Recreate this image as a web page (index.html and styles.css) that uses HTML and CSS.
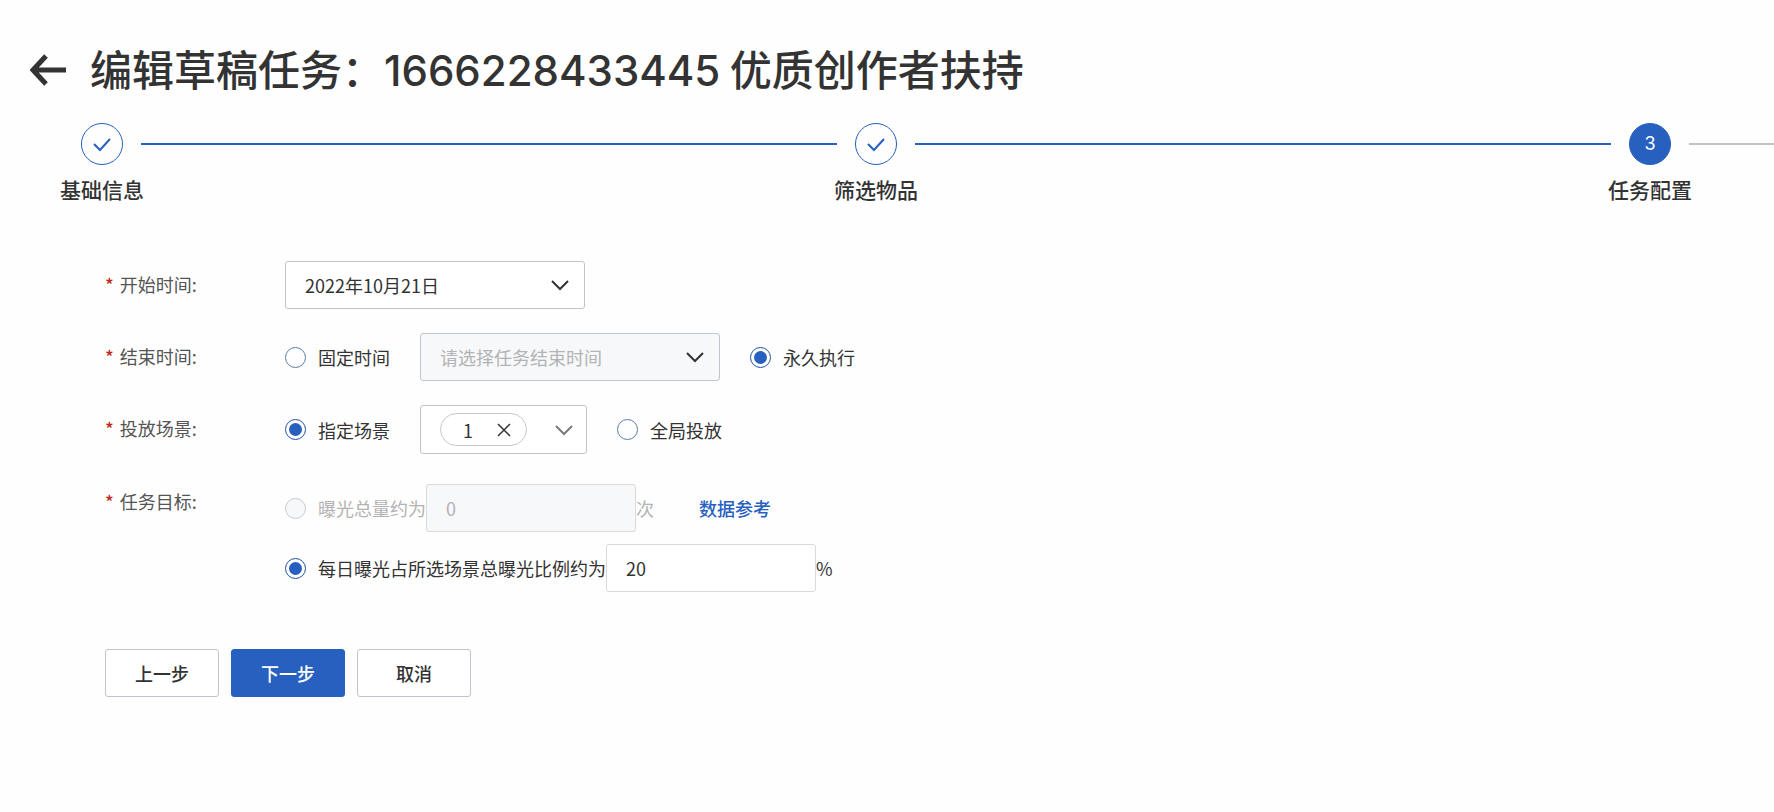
FILE: index.html
```
<!DOCTYPE html>
<html lang="zh-CN">
<head>
    <meta charset="UTF-8">
    <meta name="viewport" content="width=device-width, initial-scale=1.0">
    <title>编辑草稿任务</title>
    <link rel="stylesheet" href="styles.css">
</head>
<body>
    <header class="page-header">
        <a class="back" href="#" aria-label="返回">
            <svg width="38" height="32" viewBox="0 0 38 32" fill="none" stroke="currentColor" stroke-width="5">
                <path d="M36 16H4M16 2L3 16L16 30"/>
            </svg>
        </a>
        <h1>编辑草稿任务：<span class="task-id">1666228433445</span> 优质创作者扶持</h1>
    </header>

    <ol class="steps">
        <li class="step done">
            <span class="step-icon">
                <svg width="20" height="16" viewBox="0 0 20 16" fill="none" stroke="currentColor" stroke-width="2">
                    <path d="M2 8L8 14L18 3"/>
                </svg>
            </span>
            <span class="step-title">基础信息</span>
        </li>
        <li class="step done">
            <span class="step-icon">
                <svg width="20" height="16" viewBox="0 0 20 16" fill="none" stroke="currentColor" stroke-width="2">
                    <path d="M2 8L8 14L18 3"/>
                </svg>
            </span>
            <span class="step-title">筛选物品</span>
        </li>
        <li class="step current">
            <span class="step-icon">3</span>
            <span class="step-title">任务配置</span>
        </li>
    </ol>

    <form class="task-form">
        <div class="form-row">
            <label class="form-label" for="start-time">开始时间:</label>
            <div class="form-content">
                <div class="select">
                    <select id="start-time">
                        <option>2022年10月21日</option>
                    </select>
                    <svg class="chevron" width="18" height="12" viewBox="0 0 18 12" fill="none" stroke="currentColor" stroke-width="2">
                        <path d="M1 2L9 10L17 2"/>
                    </svg>
                </div>
            </div>
        </div>

        <div class="form-row">
            <span class="form-label" id="end-label">结束时间:</span>
            <div class="form-content" role="radiogroup" aria-labelledby="end-label">
                <label class="radio"><input type="radio" name="end">固定时间</label>
                <div class="select">
                    <select aria-label="任务结束时间" disabled>
                        <option>请选择任务结束时间</option>
                    </select>
                    <svg class="chevron" width="18" height="12" viewBox="0 0 18 12" fill="none" stroke="currentColor" stroke-width="2">
                        <path d="M1 2L9 10L17 2"/>
                    </svg>
                </div>
                <label class="radio"><input type="radio" name="end" checked>永久执行</label>
            </div>
        </div>

        <div class="form-row">
            <span class="form-label" id="scene-label">投放场景:</span>
            <div class="form-content" role="radiogroup" aria-labelledby="scene-label">
                <label class="radio"><input type="radio" name="scene" checked>指定场景</label>
                <div class="tag-select">
                    <span class="tag">
                        1
                        <button type="button" class="icon-button" aria-label="移除">
                            <svg width="14" height="14" viewBox="0 0 14 14" fill="none" stroke="currentColor" stroke-width="1.500">
                                <path d="M1 1L13 13M13 1L1 13"/>
                            </svg>
                        </button>
                    </span>
                    <button type="button" class="icon-button toggle" aria-label="展开">
                        <svg width="18" height="12" viewBox="0 0 18 12" fill="none" stroke="currentColor" stroke-width="2">
                            <path d="M1 2L9 10L17 2"/>
                        </svg>
                    </button>
                </div>
                <label class="radio"><input type="radio" name="scene">全局投放</label>
            </div>
        </div>

        <div class="form-row">
            <span class="form-label" id="goal-label">任务目标:</span>
            <div class="goals" role="radiogroup" aria-labelledby="goal-label">
                <div class="goal disabled">
                    <label class="radio"><input type="radio" name="goal" disabled>曝光总量约为</label>
                    <input class="number" type="text" value="0" aria-label="曝光总量" disabled>
                    <span>次</span>
                    <a class="link" href="#">数据参考</a>
                </div>
                <div class="goal">
                    <label class="radio"><input type="radio" name="goal" checked>每日曝光占所选场景总曝光比例约为</label>
                    <input class="number" type="text" value="20" aria-label="曝光比例">
                    <span>%</span>
                </div>
            </div>
        </div>

        <div class="actions">
            <button type="button" class="btn">上一步</button>
            <button type="submit" class="btn primary">下一步</button>
            <button type="button" class="btn">取消</button>
        </div>
    </form>
</body>
</html>
```
FILE: styles.css
```
* {
    box-sizing: border-box;
}

body {
    margin: 0;
    background-color: #fefefe;
    color: #333;
    font-family: "Noto Sans CJK SC", sans-serif;
    font-size: 18px;
    line-height: 24px;
    overflow-x: hidden;
}

input, select, button {
    font: inherit;
    color: inherit;
}

.page-header {
    display: flex;
    align-items: center;
    gap: 22px;
    padding: 40px 30px 0;
}

.back {
    display: flex;
    color: #333;
}

h1 {
    margin: 0;
    padding-bottom: 4px;
    font-size: 42px;
    font-weight: 500;
    line-height: 56px;
}

.task-id {
    font-family: Inter, sans-serif;
    line-height: 1;
}

/* steps */
.steps {
    display: flex;
    list-style: none;
    margin: 23px 0 0;
    padding: 0 0 0 60px;
    overflow: hidden;
}

.step {
    flex: 0 0 45.16%;
    display: grid;
    grid-template-columns: 84px 1fr;
    align-items: center;
    row-gap: 9px;
}

.step::after {
    content: "";
    grid-row: 1;
    grid-column: 2;
    height: 2px;
    margin-left: -3px;
    margin-right: -3px;
    background-color: #bfc4c9;
}

.step.done::after {
    background-color: #2860c0;
}

.step-icon {
    grid-row: 1;
    display: flex;
    align-items: center;
    justify-content: center;
    justify-self: center;
    width: 42px;
    height: 42px;
    border: 1px solid #2860c0;
    border-radius: 50%;
    color: #2860c0;
}

.step.current .step-icon {
    background-color: #2860c0;
    color: #fff;
    font-family: Inter, sans-serif;
}

.step-title {
    grid-row: 2;
    font-size: 21px;
    font-weight: 500;
    line-height: 30px;
    white-space: nowrap;
}

/* form */
.task-form {
    padding: 57px 30px 0 105px;
}

.form-row {
    display: flex;
    align-items: flex-start;
    margin-bottom: 24px;
}

.form-label {
    flex: 0 0 180px;
    line-height: 46px;
    color: #555;
}

.form-label::before {
    content: "*";
    margin-right: 6px;
    color: #c0281c;
    font-weight: 500;
}

.form-content {
    display: flex;
    align-items: center;
    gap: 30px;
}

.radio {
    display: flex;
    align-items: center;
    gap: 12px;
}

.radio input {
    appearance: none;
    display: grid;
    place-items: center;
    width: 21px;
    height: 21px;
    margin: 0;
    border: 1px solid #5b7aa8;
    border-radius: 50%;
    background-color: #fff;
}

.radio input:checked {
    border-color: #1f4e9c;
}

.radio input:checked::before {
    content: "";
    width: 13px;
    height: 13px;
    border-radius: 50%;
    background-color: #2860c0;
}

.radio input:disabled {
    border-color: #c5cad0;
    background-color: #f6f8fa;
}

.select {
    display: grid;
    align-items: center;
    width: 300px;
}

.select select {
    grid-area: 1 / 1;
    appearance: none;
    width: 100%;
    height: 48px;
    padding: 0 48px 0 19px;
    border: 1px solid #bfc4cd;
    border-radius: 3px;
    background-color: #fff;
}

.select select:disabled {
    background-color: #f6f8fa;
    color: #b3b3b3;
    opacity: 1;
}

.chevron {
    grid-area: 1 / 1;
    justify-self: end;
    margin-right: 16px;
    pointer-events: none;
}

.tag-select {
    display: flex;
    align-items: center;
    justify-content: space-between;
    width: 167px;
    height: 49px;
    padding: 0 13px 0 19px;
    border: 1px solid #bfc4cd;
    border-radius: 3px;
    background-color: #fff;
}

.tag {
    display: flex;
    align-items: center;
    justify-content: space-between;
    width: 87px;
    height: 33px;
    padding: 0 15px 0 22px;
    border: 1px solid #c5c8cc;
    border-radius: 17px;
}

.icon-button {
    display: flex;
    padding: 0;
    border: none;
    background: none;
    cursor: pointer;
}

.toggle {
    color: #7a7a7a;
}

.goals {
    display: flex;
    flex-direction: column;
    gap: 12px;
    padding-top: 6px;
}

.goal {
    display: flex;
    align-items: center;
}

.goal.disabled {
    color: #b3b3b3;
}

.number {
    width: 210px;
    height: 48px;
    padding: 0 19px;
    border: 1px solid #d9dadb;
    border-radius: 3px;
    background-color: #fff;
}

.number:disabled {
    background-color: #f6f8fa;
}

.link {
    margin-left: 45px;
    color: #2860c0;
    font-weight: 500;
    text-decoration: none;
}

.actions {
    display: flex;
    gap: 12px;
    padding-top: 33px;
}

.btn {
    width: 114px;
    height: 48px;
    border: 1px solid #bfc4cd;
    border-radius: 3px;
    background-color: #fff;
    font-weight: 500;
    cursor: pointer;
}

.btn.primary {
    border-color: #2860c0;
    background-color: #2860c0;
    color: #fff;
}
```
